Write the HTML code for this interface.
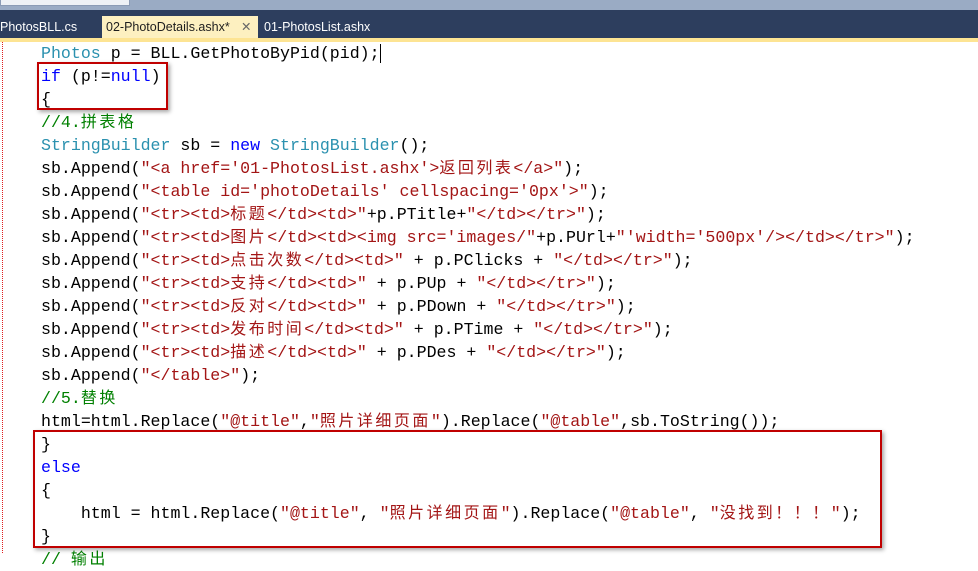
<!DOCTYPE html>
<html><head><meta charset="utf-8"><style>
body{margin:0;width:978px;height:553px;overflow:hidden;background:#fff;position:relative;font-family:"Liberation Sans","Noto Sans CJK SC",sans-serif}
.top{position:absolute;left:0;top:0;width:978px;height:10px;background:#9aabc4}
.tb{position:absolute;left:0;top:10px;width:978px;height:28px;background:#2d3e5e}
.yl{position:absolute;left:0;top:38px;width:978px;height:4px;background:#fde493}
.tab{position:absolute;top:16px;height:22px;line-height:22px;font-size:12.5px;color:#fff}
.act{background:#fdf0c0;color:#1e1e1e;left:102px;width:156px;padding-left:4px;box-sizing:border-box}
.code{position:absolute;left:41px;top:42px;font-family:"Liberation Mono","Noto Sans CJK SC",monospace;font-size:16.6px;color:#000}
.code div{height:23px;line-height:23px;white-space:pre;overflow:visible}
i{font-style:normal;font-family:"Noto Sans CJK SC",sans-serif;font-size:16px;letter-spacing:2.5px;line-height:0}
.k{color:#0000ff}.t{color:#2b91af}.s{color:#a31515}.g{color:#008000}
.box{position:absolute;border:2px solid #c00000;box-shadow:2px 2px 4px rgba(0,0,0,.35)}
.dot{position:absolute;left:2px;top:42px;height:511px;border-left:1px dotted #e02020}
</style></head><body>
<div class="top"><div style="position:absolute;left:0;top:0;width:128px;height:5px;background:#eef1f5;border:1px solid #8b9bb5;border-top:0"></div></div>
<div class="tb"></div>
<div class="tab" style="left:0">PhotosBLL.cs</div>
<div class="tab act">02-PhotoDetails.ashx* <span style="position:absolute;left:139px;color:#666">✕</span></div>
<div class="tab" style="left:264px">01-PhotosList.ashx</div>
<div class="yl"></div>
<div class="dot"></div>
<div class="code">
<div><span class="t">Photos</span> p = BLL.GetPhotoByPid(pid);<span style="border-left:1px solid #000"></span></div>
<div><span class="k">if</span> (p!=<span class="k">null</span>)</div>
<div>{</div>
<div><span class="g">//4.<i>拼表格</i></span></div>
<div><span class="t">StringBuilder</span> sb = <span class="k">new</span> <span class="t">StringBuilder</span>();</div>
<div>sb.Append(<span class="s">"&lt;a href='01-PhotosList.ashx'&gt;<i>返回列表</i>&lt;/a&gt;"</span>);</div>
<div>sb.Append(<span class="s">"&lt;table id='photoDetails' cellspacing='0px'&gt;"</span>);</div>
<div>sb.Append(<span class="s">"&lt;tr&gt;&lt;td&gt;<i>标题</i>&lt;/td&gt;&lt;td&gt;"</span>+p.PTitle+<span class="s">"&lt;/td&gt;&lt;/tr&gt;"</span>);</div>
<div>sb.Append(<span class="s">"&lt;tr&gt;&lt;td&gt;<i>图片</i>&lt;/td&gt;&lt;td&gt;&lt;img src='images/"</span>+p.PUrl+<span class="s">"'width='500px'/&gt;&lt;/td&gt;&lt;/tr&gt;"</span>);</div>
<div>sb.Append(<span class="s">"&lt;tr&gt;&lt;td&gt;<i>点击次数</i>&lt;/td&gt;&lt;td&gt;"</span> + p.PClicks + <span class="s">"&lt;/td&gt;&lt;/tr&gt;"</span>);</div>
<div>sb.Append(<span class="s">"&lt;tr&gt;&lt;td&gt;<i>支持</i>&lt;/td&gt;&lt;td&gt;"</span> + p.PUp + <span class="s">"&lt;/td&gt;&lt;/tr&gt;"</span>);</div>
<div>sb.Append(<span class="s">"&lt;tr&gt;&lt;td&gt;<i>反对</i>&lt;/td&gt;&lt;td&gt;"</span> + p.PDown + <span class="s">"&lt;/td&gt;&lt;/tr&gt;"</span>);</div>
<div>sb.Append(<span class="s">"&lt;tr&gt;&lt;td&gt;<i>发布时间</i>&lt;/td&gt;&lt;td&gt;"</span> + p.PTime + <span class="s">"&lt;/td&gt;&lt;/tr&gt;"</span>);</div>
<div>sb.Append(<span class="s">"&lt;tr&gt;&lt;td&gt;<i>描述</i>&lt;/td&gt;&lt;td&gt;"</span> + p.PDes + <span class="s">"&lt;/td&gt;&lt;/tr&gt;"</span>);</div>
<div>sb.Append(<span class="s">"&lt;/table&gt;"</span>);</div>
<div><span class="g">//5.<i>替换</i></span></div>
<div>html=html.Replace(<span class="s">"@title"</span>,<span class="s">"<i>照片详细页面</i>"</span>).Replace(<span class="s">"@table"</span>,sb.ToString());</div>
<div>}</div>
<div><span class="k">else</span></div>
<div>{</div>
<div>    html = html.Replace(<span class="s">"@title"</span>, <span class="s">"<i>照片详细页面</i>"</span>).Replace(<span class="s">"@table"</span>, <span class="s">"<i>没找到！！！</i>"</span>);</div>
<div>}</div>
<div><span class="g">// <i>输出</i></span></div>
</div>
<div class="box" style="left:37px;top:62px;width:127px;height:44px"></div>
<div class="box" style="left:33px;top:430px;width:845px;height:114px"></div>
</body></html>
